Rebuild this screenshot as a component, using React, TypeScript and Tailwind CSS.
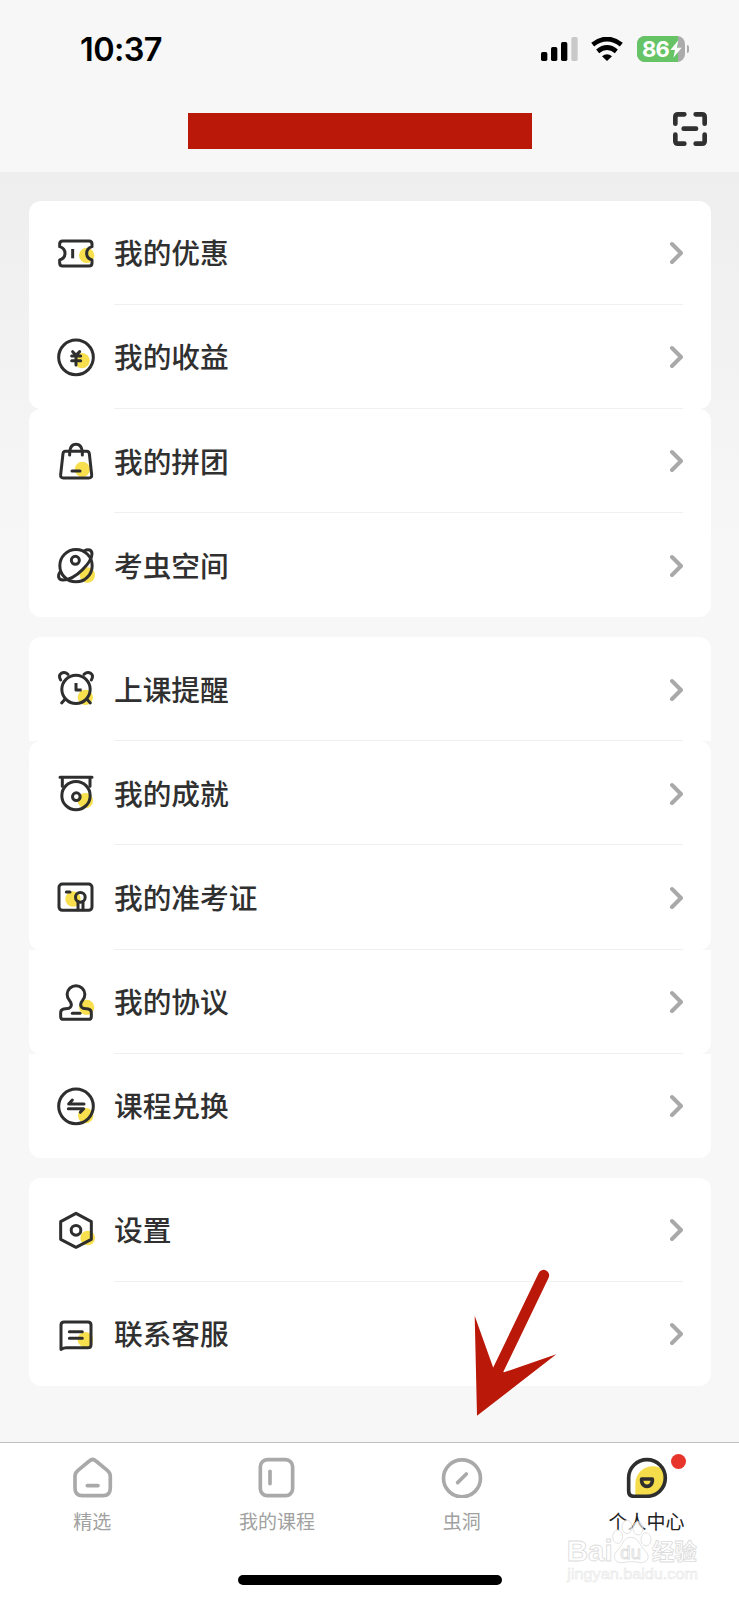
import type { ReactNode } from "react";

type MenuItem = {
    label: string;
    icon: ReactNode;
};

const Dot = ({ cx, cy, r = 23 }: { cx: number; cy: number; r?: number }) => (
    <circle cx={cx} cy={cy} r={r} fill="#f7df4e" stroke="none" />
);

const icons = {
    coupon: (
        <>
            <Dot cx={92} cy={67} />
            <path d="M20 24H99Q108 24 108 33V41Q92 46 92 61T108 81V90Q108 99 99 99H20Q11 99 11 90V81Q27 76 27 61T11 41V33Q11 24 20 24Z" fill="none" />
            <path d="M50 48V76" strokeLinecap="butt" />
        </>
    ),
    income: (
        <>
            <Dot cx={78} cy={71} />
            <circle cx="60" cy="61" r="52" />
            <path d="M50 44L60 55L71 44M47 57H74M47 71H74M60 56V84" />
        </>
    ),
    bag: (
        <>
            <Dot cx={79} cy={85} />
            <path d="M28 31H92Q99 31 100 38L107 101Q108 111 99 111H22Q13 111 14 101L21 38Q22 31 28 31Z" />
            <path d="M41 42V31Q44 10 60 10T79 31V42" />
            <path d="M48 90H72" />
        </>
    ),
    planet: (
        <>
            <Dot cx={94} cy={90} />
            <circle cx="60" cy="62" r="48.500" />
            <circle cx="58" cy="46" r="12" />
            <path d="M84 18C97 11 108 14 108 27C107 50 62 103 22 105C6 106 4 92 13 80" />
        </>
    ),
    clock: (
        <>
            <Dot cx={88} cy={85} />
            <circle cx="60" cy="61" r="42.500" />
            <path d="M14 33C3 14 23 4 36 16M106 33C117 14 97 4 84 16M27 91L17 102M93 91L103 102" />
            <path d="M60 42V63H77" strokeLinecap="butt" />
        </>
    ),
    medal: (
        <>
            <Dot cx={88} cy={83} />
            <path d="M12 13H108M19 14V40M102 14V40" />
            <circle cx="60" cy="68" r="42.500" />
            <circle cx="61" cy="71" r="11.500" />
        </>
    ),
    ticket: (
        <>
            <Dot cx={51} cy={66} />
            <rect x="9" y="21" width="99" height="79" rx="10" />
            <circle cx="73" cy="61" r="14.500" />
            <path d="M31 45H42M66 75V98M81 75V98" />
        </>
    ),
    stamp: (
        <>
            <Dot cx={92} cy={76} />
            <path d="M43 76C49 69 45 61 40 55A26.500 26.500 0 1 1 80 55C75 61 71 69 77 76C81 81 89 80 97 81Q106 83 106 92V104Q106 112 97 112H23Q14 112 14 104V92Q14 83 23 81C31 80 39 81 43 76Z" />
            <path d="M49 94H72" />
        </>
    ),
    exchange: (
        <>
            <Dot cx={89} cy={89} />
            <circle cx="60" cy="61" r="52" />
            <path d="M84 54H38L49 42M37 68H83L73 79" />
        </>
    ),
    settings: (
        <>
            <Dot cx={95} cy={84} r={22} />
            <path d="M60 10L106 35V88L60 112L14 88V35Z" />
            <circle cx="60" cy="61" r="14.500" />
        </>
    ),
    service: (
        <>
            <Dot cx={88} cy={77} />
            <path d="M24 24H96Q105 24 105 33V92Q105 101 96 101H31Q24 101 15 106V33Q15 24 24 24Z" />
            <path d="M40 53H79M40 73H79" />
        </>
    ),
};

// each section is split in rounded blocks stacked without a gap
const sections: { items: MenuItem[]; className: string }[][] = [
    [
        {
            className: "rounded-xl",
            items: [
                { label: "我的优惠", icon: icons.coupon },
                { label: "我的收益", icon: icons.income },
            ],
        },
        {
            className: "rounded-xl",
            items: [
                { label: "我的拼团", icon: icons.bag },
                { label: "考虫空间", icon: icons.planet },
            ],
        },
    ],
    [
        { className: "rounded-t-xl", items: [{ label: "上课提醒", icon: icons.clock }] },
        {
            className: "rounded-xl",
            items: [
                { label: "我的成就", icon: icons.medal },
                { label: "我的准考证", icon: icons.ticket },
            ],
        },
        { className: "rounded-b-xl", items: [{ label: "我的协议", icon: icons.stamp }] },
        { className: "rounded-b-xl", items: [{ label: "课程兑换", icon: icons.exchange }] },
    ],
    [
        {
            className: "rounded-xl",
            items: [
                { label: "设置", icon: icons.settings },
                { label: "联系客服", icon: icons.service },
            ],
        },
    ],
];

const MenuRow = ({ item, divider }: { item: MenuItem; divider: boolean }) => (
    <div className="flex h-[104.2px] pl-[27.2px] pr-[27.5px]">
        <svg
            viewBox="0 0 120 120"
            className="w-10 h-10 shrink-0 self-center"
            fill="none"
            stroke="#2e2e2e"
            strokeWidth="9"
            strokeLinecap="round"
            strokeLinejoin="round"
        >
            {item.icon}
        </svg>
        <div className={`ml-[18.3px] flex flex-1 items-center justify-between border-b ${divider ? "border-[#f0f0f0]" : "border-transparent"}`}>
            <span className="pt-px text-[28.7px] leading-none font-medium text-[#303030]">{item.label}</span>
            <svg viewBox="0 0 14 24" className="mt-[2px] w-3.5 h-6" fill="none" stroke="#a9a9a9" strokeWidth="4" strokeLinecap="round" strokeLinejoin="round">
                <path d="M3 3L12 12L3 21" />
            </svg>
        </div>
    </div>
);

const StatusBar = () => (
    <div className="flex h-[98px] items-center justify-between pl-[80px] pr-[50px]">
        <span className="mt-[2px] font-['Inter'] text-[32.5px] leading-none font-semibold tracking-[-0.6px] text-black">10:37</span>
        <div className="flex items-center">
            <svg viewBox="0 0 111 72" className="h-6 w-[37px]">
                <rect x="0" y="45" width="19" height="27" rx="5" />
                <rect x="30" y="30" width="19" height="42" rx="5" />
                <rect x="60" y="15" width="19" height="57" rx="5" />
                <rect x="91" y="0" width="19" height="72" rx="5" fill="#c9c9c9" />
            </svg>
            <svg viewBox="0 0 96 72" className="ml-[13px] h-6 w-8" fill="none" stroke="#000" strokeWidth="14">
                <path d="M5 23Q48 -11 91 23" />
                <path d="M20 43Q48 20 76 43" />
                <path d="M33 58Q48 46 63 58L48 72Z" fill="#000" stroke="none" />
            </svg>
            <div className="ml-3.5 flex items-center">
                <div className="relative h-[26px] w-12 overflow-hidden rounded-[8px] bg-[#ababab]">
                    <div className="flex h-full w-[41px] items-center bg-[#66c466] pl-[5px] font-['Inter'] text-[22px] leading-none font-bold tracking-[-0.8px] text-white">
                        86
                    </div>
                    <svg viewBox="0 0 36 54" className="absolute left-[32.5px] top-1 h-[18px] w-3" fill="#fff">
                        <path d="M25 1L1 30H15L10 53L35 23H21Z" />
                    </svg>
                </div>
                <div className="ml-[2px] h-2 w-[2px] rounded-r-full bg-[#ababab]" />
            </div>
        </div>
    </div>
);

const Header = () => (
    <header className="h-[172px] bg-[#f7f7f7]">
        <StatusBar />
        <div className="flex items-start justify-between pl-[188px] pr-8">
            <div className="mt-[15px] h-9 w-[344px] bg-[#ba1808]" />
            <svg viewBox="0 0 102 102" className="mt-[13.5px] h-[34px] w-[34px]" fill="none" stroke="#303030" strokeWidth="14" strokeLinecap="round">
                <path d="M7 35V15Q7 7 15 7H34M68 7H87Q95 7 95 15V35M95 68V87Q95 95 87 95H68M34 95H15Q7 95 7 87V68M32 50H69" />
            </svg>
        </div>
    </header>
);

const tabs = [
    {
        label: "精选",
        icon: <path d="M55 15Q65 6 75 15L109 43Q118 51 118 60V96Q118 119 96 119H34Q12 119 12 96V60Q12 51 21 43ZM49 89H81" />,
    },
    {
        label: "我的课程",
        icon: (
            <>
                <rect x="16" y="11" width="97" height="108" rx="21" />
                <path d="M45 46V83" />
            </>
        ),
    },
    {
        label: "虫洞",
        icon: (
            <>
                <circle cx="66" cy="67" r="55.500" />
                <path d="M53 80L79 54" />
            </>
        ),
    },
    {
        label: "个人中心",
        active: true,
        icon: (
            <>
                <path d="M31 122V84C31 52 56 31 84 31Q104 31 116 44A56 56 0 0 1 65 122Z" fill="#f5dc4a" stroke="none" />
                <path d="M66 11A55 55 0 0 1 66 121H27Q11 121 11 105V66A55 55 0 0 1 66 11Z" />
                <path d="M50 69H82V76Q80 91 66 91T50 76Z" />
            </>
        ),
    },
];

const TabBar = () => (
    <nav className="h-[158px] border-t border-[#bfbfbf] bg-white">
        <div className="flex">
            {tabs.map((tab) => (
                <div key={tab.label} className="flex h-[132px] flex-1 flex-col items-center pt-[13px]">
                    <div className="relative">
                        <svg
                            viewBox="0 0 130 126"
                            className="h-[42px] w-[43.3px]"
                            fill="none"
                            stroke={tab.active ? "#2e2e2e" : "#a9a9a9"}
                            strokeWidth="11"
                            strokeLinecap="round"
                            strokeLinejoin="round"
                        >
                            {tab.icon}
                        </svg>
                        {tab.active && <div className="absolute left-[46.5px] top-[-2px] h-[15px] w-[15px] rounded-full bg-[#e8352b]" />}
                    </div>
                    <span className={`mt-[13px] text-[19px] leading-none ${tab.active ? "text-[#222]" : "text-[#a1a1a1]"}`}>
                        {tab.label}
                    </span>
                </div>
            ))}
        </div>
        <div className="mx-auto h-2.5 w-[264px] rounded-full bg-black" />
    </nav>
);

const Watermark = () => (
    <svg viewBox="0 0 420 210" className="absolute left-[560px] top-[1515px] h-[70px] w-[140px]" fill="#fff" fillOpacity="0.6" stroke="#dcdcdc" strokeWidth="2.500">
        <g fontFamily="Liberation Sans, sans-serif" fontWeight="bold">
            <text x="20" y="139" fontSize="88" textLength="138" lengthAdjust="spacingAndGlyphs">Bai</text>
            <ellipse cx="173" cy="65" rx="15" ry="20" />
            <ellipse cx="201" cy="36" rx="15" ry="20" />
            <ellipse cx="234" cy="40" rx="15" ry="20" />
            <ellipse cx="258" cy="73" rx="15" ry="20" />
            <path d="M212 67C237 67 239 93 256 108C274 126 261 145 240 143C224 139 204 139 188 143C166 145 154 126 171 108C188 93 188 67 212 67Z" />
            <text x="181" y="131" fontSize="54" fontWeight="normal" textLength="62" lengthAdjust="spacingAndGlyphs">du</text>
            <text x="22" y="191" fontSize="43" stroke="#e4e4e4" strokeWidth="1.500" fontWeight="normal" textLength="392" lengthAdjust="spacingAndGlyphs">jingyan.baidu.com</text>
        </g>
        <text x="275" y="136" fontSize="68" fontWeight="bold">经验</text>
    </svg>
);

const App = () => (
    <div className="relative flex h-[1600px] w-[739px] flex-col overflow-hidden bg-[#f7f7f7] font-['Noto_Sans_CJK_SC',sans-serif]">
        <Header />
        <main className="flex flex-1 flex-col gap-[19.7px] bg-linear-to-b from-[#eeeeee] via-[#f7f7f7] via-30% to-[#f7f7f7] px-[28.5px] pt-[28.5px]">
            {sections.map((blocks, i) => (
                <section key={i}>
                    {blocks.map((block, j) => (
                        <div key={j} className={`bg-white ${block.className}`}>
                            {block.items.map((item, k) => (
                                <MenuRow
                                    key={item.label}
                                    item={item}
                                    divider={j < blocks.length - 1 || k < block.items.length - 1}
                                />
                            ))}
                        </div>
                    ))}
                </section>
            ))}
        </main>
        <TabBar />

        <svg viewBox="0 0 270 460" className="absolute left-[470px] top-[1265px] h-[153.3px] w-[90px]" fill="#ba1808">
            <path d="M221 31L82 320" stroke="#ba1808" strokeWidth="33" strokeLinecap="round" />
            <path d="M14 152L70 309L102 322L259 268L21 452Z" />
        </svg>
        <Watermark />
    </div>
);

export default App;
